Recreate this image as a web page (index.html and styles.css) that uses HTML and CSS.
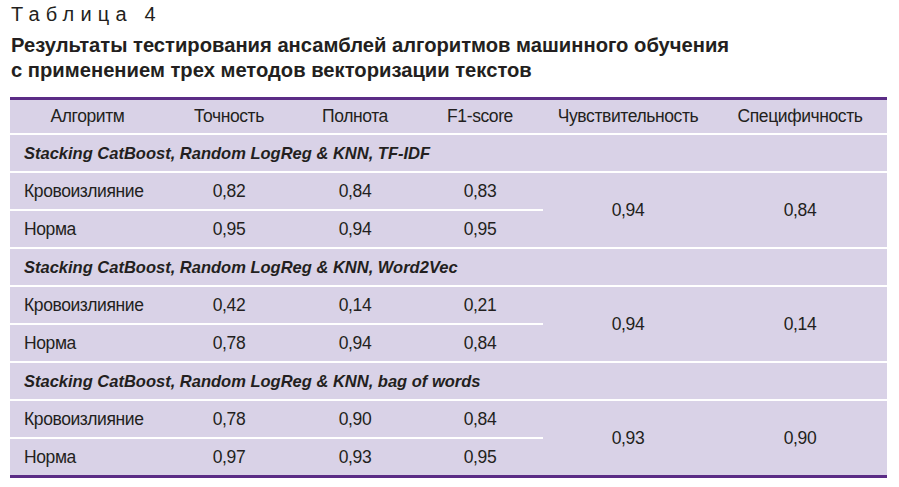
FILE: index.html
```html
<!DOCTYPE html>
<html lang="ru">
<head>
<meta charset="utf-8">
<link rel="stylesheet" href="styles.css">
</head>
<body>
<div class="page">
  <div class="caption">Таблица 4</div>
  <h1 class="title">Результаты тестирования ансамблей алгоритмов машинного обучения<br>с применением трех методов векторизации текстов</h1>
  <table class="results">
    <colgroup>
      <col class="c1"><col class="c2"><col class="c3"><col class="c4"><col class="c5"><col class="c6">
    </colgroup>
    <thead>
      <tr class="head">
        <th>Алгоритм</th><th>Точность</th><th>Полнота</th><th>F1-score</th><th>Чувствительность</th><th>Специфичность</th>
      </tr>
    </thead>
    <tbody>
      <tr class="group"><td colspan="6">Stacking CatBoost, Random LogReg &amp; KNN, TF-IDF</td></tr>
      <tr class="row"><td class="name">Кровоизлияние</td><td>0,82</td><td>0,84</td><td>0,83</td><td rowspan="2">0,94</td><td rowspan="2">0,84</td></tr>
      <tr class="row"><td class="name">Норма</td><td>0,95</td><td>0,94</td><td>0,95</td></tr>
      <tr class="group"><td colspan="6">Stacking CatBoost, Random LogReg &amp; KNN, Word2Vec</td></tr>
      <tr class="row"><td class="name">Кровоизлияние</td><td>0,42</td><td>0,14</td><td>0,21</td><td rowspan="2">0,94</td><td rowspan="2">0,14</td></tr>
      <tr class="row"><td class="name">Норма</td><td>0,78</td><td>0,94</td><td>0,84</td></tr>
      <tr class="group"><td colspan="6">Stacking CatBoost, Random LogReg &amp; KNN, bag of words</td></tr>
      <tr class="row"><td class="name">Кровоизлияние</td><td>0,78</td><td>0,90</td><td>0,84</td><td rowspan="2">0,93</td><td rowspan="2">0,90</td></tr>
      <tr class="row last"><td class="name">Норма</td><td>0,97</td><td>0,93</td><td>0,95</td></tr>
    </tbody>
  </table>
</div>
</body>
</html>
```
FILE: styles.css
```css
html, body {
  margin: 0;
  padding: 0;
  background: #ffffff;
}
.page {
  padding: 3px 12px 0 10px;
  color: #231f20;
  font-family: "Liberation Sans", Arial, sans-serif;
}
.caption {
  font-size: 20px;
  letter-spacing: 6.2px;
  line-height: 22px;
  padding-left: 1px;
}
.title {
  margin: 8px 0 0 1px;
  font-size: 20.2px;
  font-weight: bold;
  line-height: 25px;
}
.results {
  margin-top: 14px;
  width: 877px;
  border-collapse: collapse;
  table-layout: fixed;
  border-top: 3px solid #5b2c86;
  border-bottom: 3px solid #5b2c86;
  font-family: "Liberation Sans Narrow", "Arial Narrow", "Liberation Sans", sans-serif;
  font-size: 17.5px;
  letter-spacing: -0.4px;
  color: #231f20;
}
.c1 { width: 155px; }
.c2 { width: 128px; }
.c3 { width: 124px; }
.c4 { width: 126px; }
.c5 { width: 170px; }
.c6 { width: 174px; }
.results th, .results td {
  background: #d9d2e7;
  padding: 0;
  text-align: center;
  border-bottom: 2px solid #ffffff;
}
.head th {
  height: 33px;
  font-weight: normal;
}
.group td {
  height: 36px;
  text-align: left;
  padding-left: 14px;
  font-family: "Liberation Sans", Arial, sans-serif;
  font-weight: bold;
  font-style: italic;
  font-size: 16.5px;
  letter-spacing: 0;
}
.row td {
  height: 36px;
}
.row td.name {
  text-align: left;
  padding-left: 14px;
}
.last td {
  border-bottom: none;
}
```
